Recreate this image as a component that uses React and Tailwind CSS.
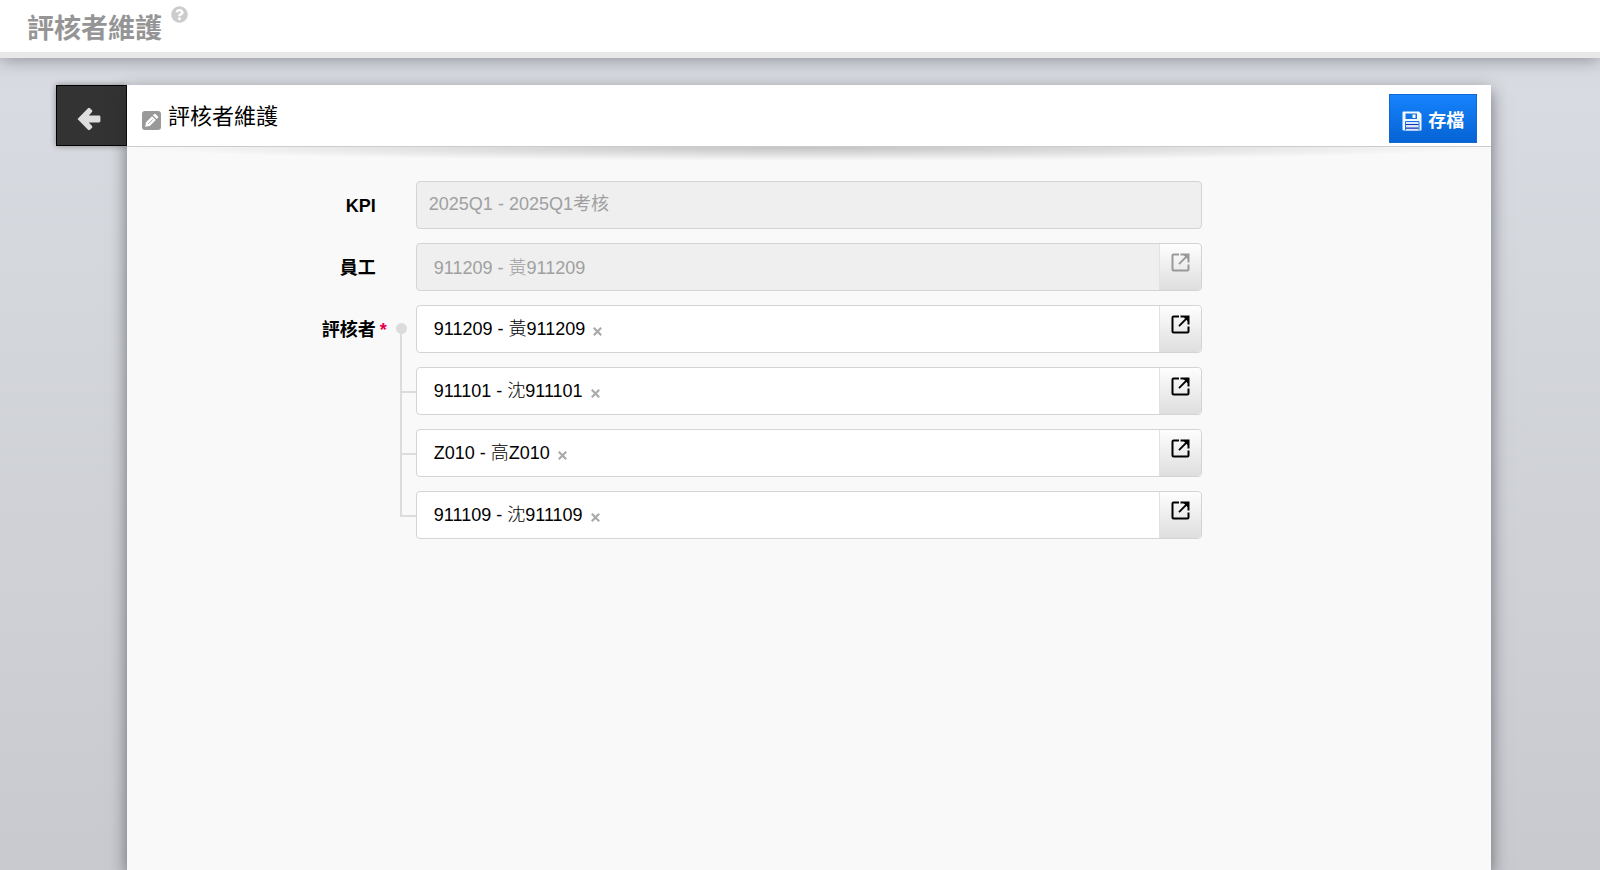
import { FaQuestionCircle } from "react-icons/fa";

const reviewers = [
  { id: "r1", name: "911209 - 黃911209" },
  { id: "r2", name: "911101 - 沈911101" },
  { id: "r3", name: "Z010 - 高Z010" },
  { id: "r4", name: "911109 - 沈911109" },
];

function ArrowIcon() {
  return (
    <svg viewBox="0 0 24 24" className="h-6 w-6" fill="#dedede" aria-hidden="true">
      <path d="M0.5 12 11 1.2Q12 .4 13 1.2L15 3.2Q15.8 4 15 5L11.8 8.6H22Q23.4 8.6 23.4 10V14Q23.4 15.4 22 15.4H11.8L15 19Q15.8 20 15 20.8L13 22.8Q12 23.6 11 22.8Z" />
    </svg>
  );
}

function EditIcon() {
  return (
    <svg viewBox="0 0 19 19" className="h-[19px] w-[19px]" aria-hidden="true">
      <rect width="19" height="19" rx="3" fill="#999" />
      <path d="M3.2 15.8 4 11.2 10 5.2 13.8 9 7.8 15ZM10.9 4.3 12.2 3Q12.8 2.5 13.4 3L16 5.6Q16.5 6.2 16 6.8L14.7 8.1Z" fill="#fff" />
      <path d="M6.4 12.8 11 8.2" stroke="#999" strokeWidth="0.8" />
    </svg>
  );
}

function SaveIcon() {
  return (
    <svg viewBox="0 0 20 20" className="h-5 w-5" aria-hidden="true">
      <path d="M1.5 0.5H17L19.5 3V19.5H1.5Q.5 19.5 .5 18.5V1.5Q.5 .5 1.5 .5Z" fill="#f4f8ff" />
      <path d="M3.5 2.5H15V8H3.5Z" fill="#1273e6" />
      <path d="M10.5 3.5H13.5V7H10.5Z" fill="#fff" />
      <path d="M4 11H16.5V19.5H4Z" fill="#dbe8fb" />
      <path d="M4 13.5H16.5M4 17.2H16.5" stroke="#1230b8" strokeWidth="1.2" />
      <path d="M3.5 19V10.5H17V19" fill="none" stroke="#1273e6" strokeWidth="1" />
    </svg>
  );
}

function OpenIcon() {
  return (
    <svg viewBox="0 0 19 19" className="h-[19px] w-[19px]" fill="none" stroke="currentColor" strokeWidth="2" aria-hidden="true">
      <path d="M8 1.5H2.5Q1.5 1.5 1.5 2.5V16.5Q1.5 17.5 2.5 17.5H16.5Q17.5 17.5 17.5 16.5V11.5" />
      <path d="M9.5 1.5H17.5V9.5" />
      <path d="M12.5 2H17V6.5Z" fill="currentColor" stroke="none" />
      <path d="M16 3 8 11.2" strokeWidth="1.8" />
    </svg>
  );
}

function PickerButton({ label, disabled }) {
  return (
    <button
      type="button"
      aria-label={label}
      disabled={disabled}
      className="flex w-[42px] shrink-0 items-start justify-center rounded-r border-l border-[#e2e2e2] bg-linear-to-b from-[#fefefe] to-[#dedede] pt-[9px] text-black disabled:text-[#999]"
    >
      <OpenIcon />
    </button>
  );
}

function FieldRow({ label, htmlFor, children }) {
  return (
    <div className="flex pb-[14px]">
      <label htmlFor={htmlFor} className="w-[20%] pt-[13px] pr-6 text-right leading-6 font-bold">
        {label}
      </label>
      <div className="w-4 shrink-0" />
      <div className="w-[57.6%]">{children}</div>
    </div>
  );
}

// One reviewer with its branch of the connector line
function ReviewerItem({ reviewer, first, last }) {
  return (
    <li className="flex">
      <div className="relative w-4 shrink-0">
        {first ? (
          <>
            <div className="h-6" />
            <span className="absolute top-[18px] -left-1 h-[11px] w-[11px] rounded-full bg-[#dcdcdc]" />
          </>
        ) : (
          <div className="h-[26px] border-b-2 border-l-2 border-[#dcdcdc]" />
        )}
        {!last && <div className={`${first ? "h-[38px]" : "h-9"} border-l-2 border-[#dcdcdc]`} />}
      </div>
      <div className="mb-[14px] flex h-12 flex-1 rounded border border-[#d4d4d4] bg-white">
        <div className="flex flex-1 items-center gap-2 pl-[17px]">
          <span className="font-light">{reviewer.name}</span>
          <button type="button" aria-label={`移除 ${reviewer.name}`} className="pt-1 text-[#aaa]">
            <svg viewBox="0 0 9 9" className="h-[9px] w-[9px]" stroke="currentColor" strokeWidth="2.2" aria-hidden="true">
              <path d="M.8 .8 8.2 8.2M8.2 .8 .8 8.2" />
            </svg>
          </button>
        </div>
        <PickerButton label="選擇評核者" />
      </div>
    </li>
  );
}

export default function App() {
  return (
    <div className="flex min-h-screen flex-col bg-linear-to-b from-[#dadde3] to-[#c8cacf] font-['Liberation_Sans','Noto_Sans_CJK_TC',sans-serif] text-lg text-black">
      <header className="flex h-[58px] items-start gap-2 border-b-6 border-[#e8e8e8] bg-white pl-[27px] shadow-[0_0_18px_rgba(70,70,80,0.6)]">
        <h1 className="pt-[11px] text-[27px] leading-9 font-bold text-[#959595]">評核者維護</h1>
        <button type="button" aria-label="說明" className="pt-[6px] pl-px text-[#ccc]">
          <FaQuestionCircle className="h-[17px] w-[17px]" />
        </button>
      </header>

      <main className="mt-[27px] mr-[6.8%] ml-[3.5%] flex flex-1">
        <button
          type="button"
          aria-label="返回"
          className="flex h-[61px] w-[71px] shrink-0 items-center justify-center border border-black bg-[#333] pt-[6px] pr-[6px] shadow-[0_0_6px_rgba(0,0,0,0.4)]"
        >
          <ArrowIcon />
        </button>

        <section className="flex-1 bg-[#f9f9f9] shadow-[0_6px_16px_rgba(40,40,50,0.6)]">
          <div className="flex h-[62px] items-center justify-between border-b border-[#ccc] bg-white pr-[14px] pl-[15px]">
            <div className="flex items-center gap-[7px] pt-[2px]">
              <span className="pt-2">
                <EditIcon />
              </span>
              <h2 className="text-[22px] leading-8">評核者維護</h2>
            </div>
            <button
              type="button"
              className="mt-[6px] flex h-[49px] items-center gap-[6px] border border-[#1068d0] bg-linear-to-b from-[#1683fd] to-[#0663d4] px-3 pt-1 font-bold text-white"
            >
              <SaveIcon />
              <span>存檔</span>
            </button>
          </div>
          <div className="h-[34px] bg-[radial-gradient(ellipse_50%_14px_at_50%_0,rgba(0,0,0,0.22),transparent)]" />

          <form>
            <FieldRow label="KPI" htmlFor="kpi">
              <input
                id="kpi"
                disabled
                defaultValue="2025Q1 - 2025Q1考核"
                className="h-12 w-full rounded border border-[#d4d4d4] bg-[#efefef] px-3 pb-[6px] text-[#a0a0a0]"
              />
            </FieldRow>
            <FieldRow label="員工" htmlFor="employee">
              <div className="flex h-12 rounded border border-[#d4d4d4] bg-[#efefef]">
                <input
                  id="employee"
                  disabled
                  defaultValue="911209 - 黃911209"
                  className="min-w-0 flex-1 pt-px pl-[17px] font-light text-[#a0a0a0]"
                />
                <PickerButton label="選擇員工" disabled />
              </div>
            </FieldRow>
            <div role="group" aria-labelledby="reviewer-label" className="flex">
              <div id="reviewer-label" className="flex w-[20%] justify-end gap-1 pt-[13px] pr-3 leading-6 font-bold">
                <span>評核者</span>
                <span className="w-2 text-[#e5004f]">*</span>
              </div>
              <ul className="w-[calc(57.6%+16px)]">
                {reviewers.map((reviewer, i) => (
                  <ReviewerItem
                    key={reviewer.id}
                    reviewer={reviewer}
                    first={i === 0}
                    last={i === reviewers.length - 1}
                  />
                ))}
              </ul>
            </div>
          </form>
        </section>
      </main>
    </div>
  );
}
